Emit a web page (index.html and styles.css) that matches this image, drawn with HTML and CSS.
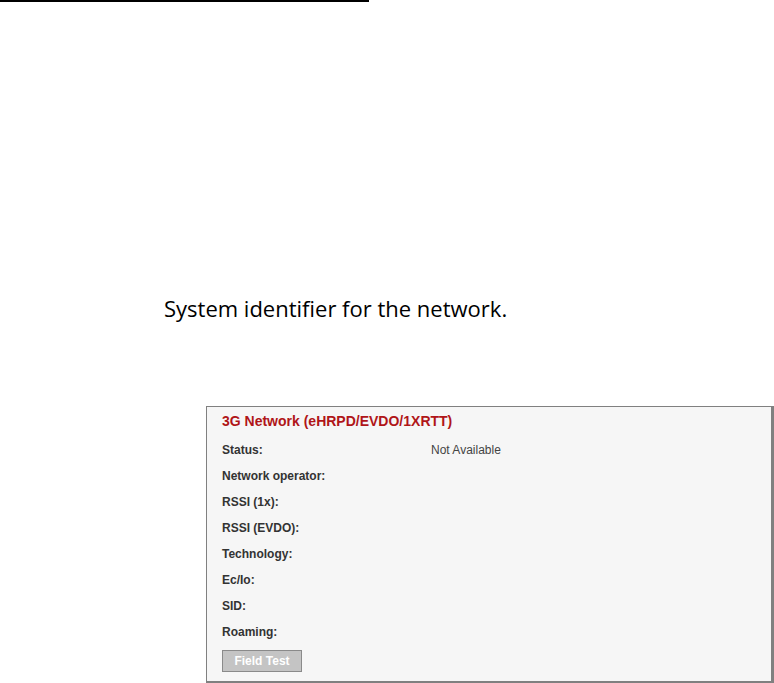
FILE: index.html
```html
<!DOCTYPE html>
<html lang="en">
<head>
  <meta charset="UTF-8">
  <title>SID</title>
  <link rel="stylesheet" href="styles.css">
</head>
<body>

<div class="rule"></div>

<p class="desc">System identifier for the network.</p>

<div class="panel">
  <h3>3G Network (eHRPD/EVDO/1XRTT)</h3>
  <div class="row"><span class="label">Status:</span><span class="value">Not Available</span></div>
  <div class="row"><span class="label">Network operator:</span></div>
  <div class="row"><span class="label">RSSI (1x):</span></div>
  <div class="row"><span class="label">RSSI (EVDO):</span></div>
  <div class="row"><span class="label">Technology:</span></div>
  <div class="row"><span class="label">Ec/Io:</span></div>
  <div class="row"><span class="label">SID:</span></div>
  <div class="row"><span class="label">Roaming:</span></div>
  <button class="btn" disabled>Field Test</button>
</div>

</body>
</html>
```

FILE: styles.css
```css
body {
  margin: 0;
  background-color: white;
  font-family: "Liberation Sans", Arial, sans-serif;
}

.rule {
  width: 369px;
  height: 2px;
  background-color: black;
}

.desc {
  margin: 291px 0 0 164px;
  font-family: "Open Sans", sans-serif;
  font-size: 22px;
  color: #000;
}

.panel {
  margin: 83px 0 0 206px;
  background-color: #f6f6f6;
  border: 1px solid #808080;
  border-right-width: 3px;
  border-bottom-width: 2px;
  padding: 6px 15px 10px 15px;
  height: 258px;
}

.panel h3 {
  margin: 0 0 8px 0;
  font-size: 14px;
  color: #b01518;
}

.row {
  display: flex;
  height: 26px;
  align-items: center;
  font-size: 12px;
  color: #333;
}

.label {
  width: 209px;
  font-weight: bold;
}

.value {
  color: #444;
}

.btn {
  margin-top: 5px;
  width: 80px;
  height: 22px;
  background-color: #c4c4c4;
  border: 1px solid #8a8a8a;
  color: white;
  font-family: "Liberation Sans", Arial, sans-serif;
  font-weight: bold;
  font-size: 12px;
  padding: 0;
}
```
